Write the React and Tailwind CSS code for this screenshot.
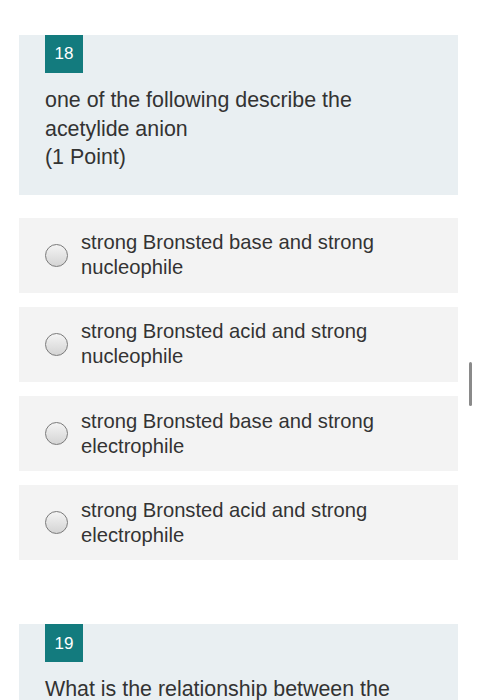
import React from 'react';

const options = [
  'strong Bronsted base and strong nucleophile',
  'strong Bronsted acid and strong nucleophile',
  'strong Bronsted base and strong electrophile',
  'strong Bronsted acid and strong electrophile',
];

function Radio() {
  return (
    <span className="shrink-0 w-[23px] h-[23px] rounded-full border border-[#7a7a7a] bg-gradient-to-b from-[#f4f4f4] to-[#d4d4d4]" />
  );
}

function QuestionHead({ num, children }) {
  return (
    <div className="bg-[#e9eff2] px-[26px] pb-[23px]">
      <div className="w-[38px] h-[38px] bg-[#137b7e] text-white flex items-center justify-center text-[17px]">
        {num}
      </div>
      <div className="mt-[13px] text-[21.4px] leading-[28.5px] text-[#333] pr-[20px]">{children}</div>
    </div>
  );
}

export default function App() {
  return (
    <div className="relative w-[478px] h-[700px] overflow-hidden bg-white" style={{ fontFamily: '"Liberation Sans", Arial, sans-serif' }}>
      <div className="pt-[35px] pl-[19px] w-[458px]">
        <QuestionHead num="18">
          <div className="pr-[40px]">one of the following describe the acetylide anion</div>
          <div>(1 Point)</div>
        </QuestionHead>

        <div className="mt-[23px] flex flex-col gap-[14.3px]">
          {options.map((o) => (
            <div key={o} className="h-[75px] bg-[#f3f3f3] flex items-center pl-[26px] pr-[40px] gap-[13px]">
              <Radio />
              <div className="text-[20.2px] leading-[25px] text-[#333]">{o}</div>
            </div>
          ))}
        </div>

        <div className="mt-[64px]">
          <QuestionHead num="19">
            <div>What is the relationship between the</div>
          </QuestionHead>
        </div>
      </div>

      {/* scrollbar thumb */}
      <div className="absolute left-[469px] top-[362px] w-[3px] h-[44px] rounded-full bg-[#8a8a8a]" />
    </div>
  );
}
